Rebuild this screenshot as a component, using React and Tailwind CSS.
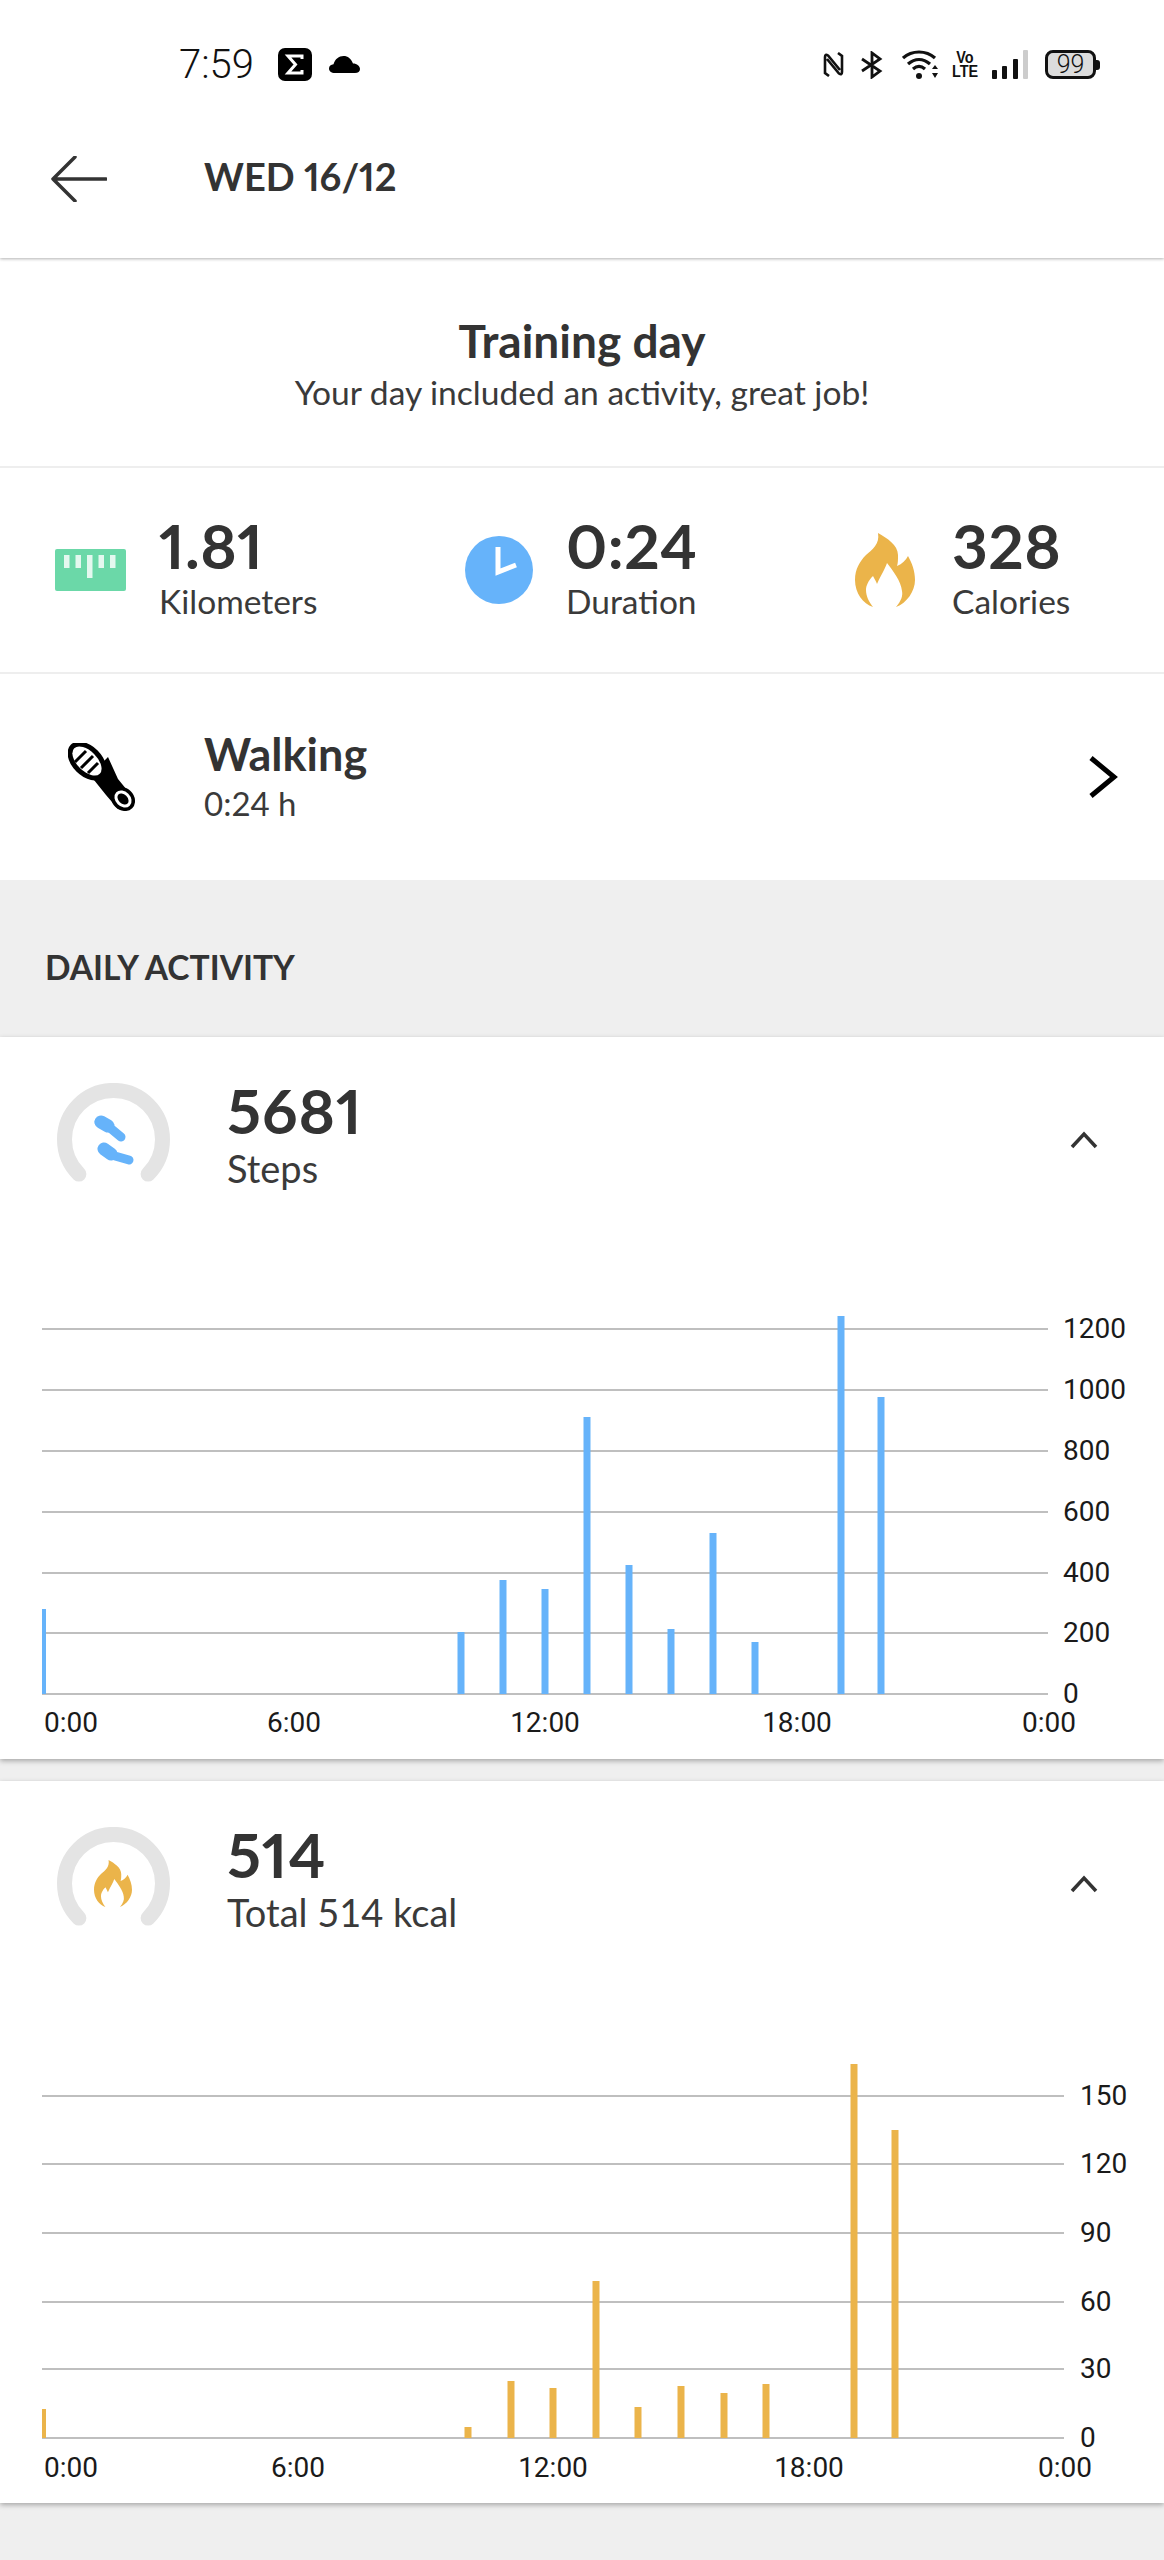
import React from 'react';

const FLAME = "M23 0C32 5 43 12 43 22C43 27 43 30 42 33C47 31 51 27 53 23C57 30 60 38 60 47C60 58 52 70 41 74C46 68 48 63 47 58C46 48 38 38 32 30C30 36 26 42 22 51C21 48 19 45 18 43C13 48 11 53 11 57C11 63 14 69 18 74C8 71 0 60 0 47C0 36 5 28 11 22C17 17 25 11 23 0Z";

// 차트 데이터 (좌표는 차트 svg 기준)
const stepsChart = {
  color: '#66b3fa',
  gridEnd: 1048,
  labelX: 1063,
  base: 394,
  axisY: 432,
  grid: [[29, '1200'], [90, '1000'], [151, '800'], [212, '600'], [273, '400'], [333, '200'], [394, '0']],
  axis: [[294, '6:00'], [545, '12:00'], [797, '18:00'], [1049, '0:00']],
  bars: [[461, 332], [503, 280], [545, 289], [587, 117], [629, 265], [671, 329], [713, 233], [755, 342], [841, 16], [881, 97]],
  first: 309,
};

const caloriesChart = {
  color: '#ebb44a',
  gridEnd: 1064,
  labelX: 1080,
  base: 394,
  axisY: 433,
  grid: [[52, '150'], [120, '120'], [189, '90'], [258, '60'], [325, '30'], [394, '0']],
  axis: [[298, '6:00'], [553, '12:00'], [809, '18:00'], [1065, '0:00']],
  bars: [[468, 383], [511, 337], [553, 344], [596, 237], [638, 363], [681, 342], [724, 349], [766, 340], [854, 20], [895, 86]],
  first: 365,
};

function Chart({ data }) {
  return (
    <svg className="block" width="1164" height="459" viewBox="0 0 1164 459">
      {data.grid.map(([y, label]) => (
        <g key={label}>
          <line x1="42" x2={data.gridEnd} y1={y} y2={y} stroke="#aaaaaa" strokeWidth="1.5" />
          <text x={data.labelX} y={y + 9} className="font-['Roboto',sans-serif] text-[28px] fill-[#1a1a1a]">{label}</text>
        </g>
      ))}
      <rect x="42" y={data.first} width="4" height={data.base - data.first} fill={data.color} />
      {data.bars.map(([x, top]) => (
        <rect key={x} x={x - 3.5} y={top} width="7" height={data.base - top} fill={data.color} />
      ))}
      <text x="44" y={data.axisY} className="font-['Roboto',sans-serif] text-[28px] fill-[#1a1a1a]">0:00</text>
      {data.axis.map(([x, label]) => (
        <text key={x} x={x} y={data.axisY} textAnchor="middle" className="font-['Roboto',sans-serif] text-[28px] fill-[#1a1a1a]">{label}</text>
      ))}
    </svg>
  );
}

function Gauge({ children }) {
  return (
    <svg width="113" height="99" viewBox="0 0 113 99" className="shrink-0">
      <path d="M21.9 91.1A49 49 0 1 1 91.1 91.1" fill="none" stroke="#e4e4e4" strokeWidth="15" strokeLinecap="round" />
      {children}
    </svg>
  );
}

function ChevronUp() {
  return (
    <svg width="30" height="24" viewBox="0 0 30 24" className="mt-[91px] mr-[65px]">
      <path d="M3 19L15 6L27 19" fill="none" stroke="#333" strokeWidth="3.5" />
    </svg>
  );
}

function Card({ value, label, gauge, chart, className }) {
  return (
    <div className={`bg-white shadow-[0_2px_5px_rgba(0,0,0,0.3)] ${className}`}>
      <div className="flex justify-between h-[263px]">
        <div className="flex items-start pl-[57px] pt-[46px]">
          {gauge}
          <div className="ml-[57px]">
            <div className="text-[62px] leading-[60px] mt-[-3px] font-bold tracking-[1px] text-[#333] proportional-nums">{value}</div>
            <div className="text-[38px] leading-[44px] mt-[6px] text-[#3a3a3a]">{label}</div>
          </div>
        </div>
        <ChevronUp />
      </div>
      <Chart data={chart} />
    </div>
  );
}

function Stat({ icon, value, label, className }) {
  return (
    <div className={`flex items-center ${className}`}>
      {icon}
      <div className="mb-[4px]">
        <div className="text-[62px] leading-[60px] font-bold tracking-[0.5px] text-[#333] proportional-nums">{value}</div>
        <div className="text-[33.5px] leading-[42px] mt-[5px] text-[#3a3a3a]">{label}</div>
      </div>
    </div>
  );
}

function StatusBar() {
  return (
    <div className="flex items-center justify-between h-[129px] pl-[179px] pr-[64px]">
      <div className="flex items-center">
        <span className="font-['Roboto',sans-serif] font-light text-[40px] leading-none text-[#111]">7:59</span>
        {/* 시그마 아이콘 */}
        <svg width="34" height="33" viewBox="0 0 34 33" className="ml-[24px]">
          <rect width="34" height="33" rx="7" fill="#000" />
          <path d="M24 11V8H10L17.500 16.500L10 25H24V22" fill="none" stroke="#fff" strokeWidth="3" />
        </svg>
        <svg width="31" height="17" viewBox="0 0 31 17" className="ml-[17px]">
          <path d="M6 17C2 17 0 15 0 12.500C0 10 2 8.500 4.500 8.300C6 3 10 0 14.500 0C19 0 22 2.500 24 7.500C28 7.500 31 10 31 13C31 15.500 29 17 26 17Z" fill="#000" />
        </svg>
      </div>
      <div className="flex items-center">
        <svg width="21" height="25" viewBox="0 0 21 25">
          <path d="M6 24L2 21V5Q2 1.500 5 3.500L17 18M15 1L19 4V20Q19 23.500 16 21.500L4 7" fill="none" stroke="#111" strokeWidth="2.600" />
        </svg>
        <svg width="22" height="28" viewBox="0 0 22 28" className="ml-[17px]">
          <path d="M1 8L19 20L11 26V2L19 8L1 20" fill="none" stroke="#111" strokeWidth="2.800" />
        </svg>
        <svg width="38" height="29" viewBox="0 0 38 29" className="ml-[19px]">
          <path d="M1 8C10 0 24 0 33 8M6 14C13 8 21 8 28 14M11 19C15 15.500 19 15.500 23 19" fill="none" stroke="#111" strokeWidth="3.200" />
          <circle cx="17" cy="26" r="3" fill="#111" />
          <path d="M33 15L30 19H36ZM33 28L30 23H36Z" fill="#111" />
        </svg>
        <div className="ml-[14px] w-[22px] flex flex-col items-center font-['Liberation_Sans',sans-serif] font-bold text-[16px] leading-[14px] text-[#111] scale-x-[0.9]">
          <span>Vo</span>
          <span>LTE</span>
        </div>
        <svg width="36" height="29" viewBox="0 0 36 29" className="ml-[16px]">
          <rect x="0" y="20" width="5" height="9" rx="1" fill="#111" />
          <rect x="10" y="16" width="5" height="13" rx="1" fill="#111" />
          <rect x="21" y="9" width="5" height="20" rx="1" fill="#111" />
          <rect x="31" y="0" width="5" height="29" rx="1" fill="#ccc" />
        </svg>
        <div className="ml-[17px] flex items-center">
          <div className="w-[51px] h-[29px] flex items-center justify-center rounded-[8px] border-[3px] border-[#111] bg-[#dcdcdc] font-['Roboto',sans-serif] font-light text-[25px] leading-none text-[#111]">99</div>
          <div className="w-[4px] h-[10px] rounded-r-[3px] bg-[#111]" />
        </div>
      </div>
    </div>
  );
}

export default function App() {
  return (
    <div className="w-[1164px] h-[2560px] bg-[#efefef] overflow-hidden font-['Lato',sans-serif]">
      {/* header */}
      <div className="relative z-10 h-[258px] bg-white shadow-[0_1px_3px_rgba(0,0,0,0.3)]">
        <StatusBar />
        <div className="flex items-center h-[100px] pl-[51px]">
          <svg width="56" height="46" viewBox="0 0 56 46">
            <path d="M55 23H2M24 1L2 23L24 45" fill="none" stroke="#333" strokeWidth="3.500" strokeLinecap="round" strokeLinejoin="round" />
          </svg>
          <span className="ml-[97px] mt-[-6px] text-[38px] font-bold text-[#333] proportional-nums">WED 16/12</span>
        </div>
      </div>

      {/* summary */}
      <div className="h-[210px] bg-white border-b-2 border-[#eeeeee] flex flex-col items-center pt-[60px]">
        <div className="text-[46px] leading-[46px] font-bold text-[#333]">Training day</div>
        <div className="text-[33.6px] leading-[42px] mt-[7px] text-[#3a3a3a]">Your day included an activity, great job!</div>
      </div>

      {/* stats */}
      <div className="h-[206px] bg-white border-b-2 border-[#eeeeee] flex items-center">
        <Stat
          className="w-[410px] pl-[55px]"
          value="1.81"
          label="Kilometers"
          icon={
            <svg width="71" height="42" viewBox="0 0 71 42" className="mr-[33px]">
              <rect width="71" height="42" rx="2" fill="#6bd8a8" />
              <g fill="#e4f8ef">
                <rect x="9" y="6" width="5.500" height="13" />
                <rect x="20.500" y="6" width="5.500" height="13" />
                <rect x="32" y="6" width="5.500" height="23" />
                <rect x="43.500" y="6" width="5.500" height="13" />
                <rect x="55" y="6" width="5.500" height="13" />
              </g>
            </svg>
          }
        />
        <Stat
          className="w-[390px] pl-[55px]"
          value="0:24"
          label="Duration"
          icon={
            <svg width="68" height="68" viewBox="0 0 68 68" className="mr-[33px]">
              <circle cx="34" cy="34" r="34" fill="#66b3fa" />
              <path d="M33 11V36L51 29" fill="none" stroke="#fff" strokeWidth="5" />
            </svg>
          }
        />
        <Stat
          className="pl-[55px]"
          value="328"
          label="Calories"
          icon={
            <svg width="60" height="74" viewBox="0 0 60 74" className="mr-[37px]">
              <path d={FLAME} fill="#ebb44a" />
            </svg>
          }
        />
      </div>

      {/* activity */}
      <div className="h-[206px] bg-white flex items-center justify-between pl-[68px] pr-[46px]">
        <div className="flex items-center">
          <svg width="67" height="68" viewBox="0 0 67 68">
            <path d="M22 32L40 14L50 36L63 52L50 66L38 52Z" fill="#000" />
            <ellipse cx="19" cy="18" rx="23" ry="15" transform="rotate(45 19 18)" fill="#000" />
            <ellipse cx="19" cy="18" rx="18" ry="10" transform="rotate(45 19 18)" fill="#fff" />
            <path d="M7 19L18 8M13 25L25 13M20 30L30 20" stroke="#000" strokeWidth="3" />
            <ellipse cx="55" cy="56" rx="13" ry="11" transform="rotate(45 55 56)" fill="#000" />
            <ellipse cx="55" cy="56" rx="8" ry="6" transform="rotate(45 55 56)" fill="none" stroke="#fff" strokeWidth="3" />
          </svg>
          <div className="ml-[69px]">
            <div className="text-[45px] leading-[46px] font-bold text-[#333]">Walking</div>
            <div className="text-[33px] leading-[40px] mt-[6px] text-[#3a3a3a]">0:24 h</div>
          </div>
        </div>
        <svg width="30" height="42" viewBox="0 0 30 42">
          <path d="M3 2L26 21L3 40" fill="none" stroke="#000" strokeWidth="5" />
        </svg>
      </div>

      {/* daily activity */}
      <div className="h-[157px] flex items-center pl-[45px] pt-[18px] text-[33.6px] font-bold text-[#333]">DAILY ACTIVITY</div>

      <Card
        value="5681"
        label="Steps"
        chart={stepsChart}
        gauge={
          <Gauge>
            <path d="M42 39L52 44L64 54" fill="none" stroke="#66b3fa" strokeWidth="9" strokeLinecap="round" strokeLinejoin="round" />
            <path d="M44 39L51 43" fill="none" stroke="#66b3fa" strokeWidth="13" strokeLinecap="round" />
            <path d="M46 65L58 73L72 77" fill="none" stroke="#66b3fa" strokeWidth="9" strokeLinecap="round" strokeLinejoin="round" />
            <path d="M47 66L54 71" fill="none" stroke="#66b3fa" strokeWidth="13" strokeLinecap="round" />
          </Gauge>
        }
      />

      <div className="h-[22px]" />

      <Card
        value="514"
        label="Total 514 kcal"
        chart={caloriesChart}
        gauge={
          <Gauge>
            <svg x="37" y="33" width="38" height="47" viewBox="0 0 60 74">
              <path d={FLAME} fill="#ebb44a" />
            </svg>
          </Gauge>
        }
      />
    </div>
  );
}
